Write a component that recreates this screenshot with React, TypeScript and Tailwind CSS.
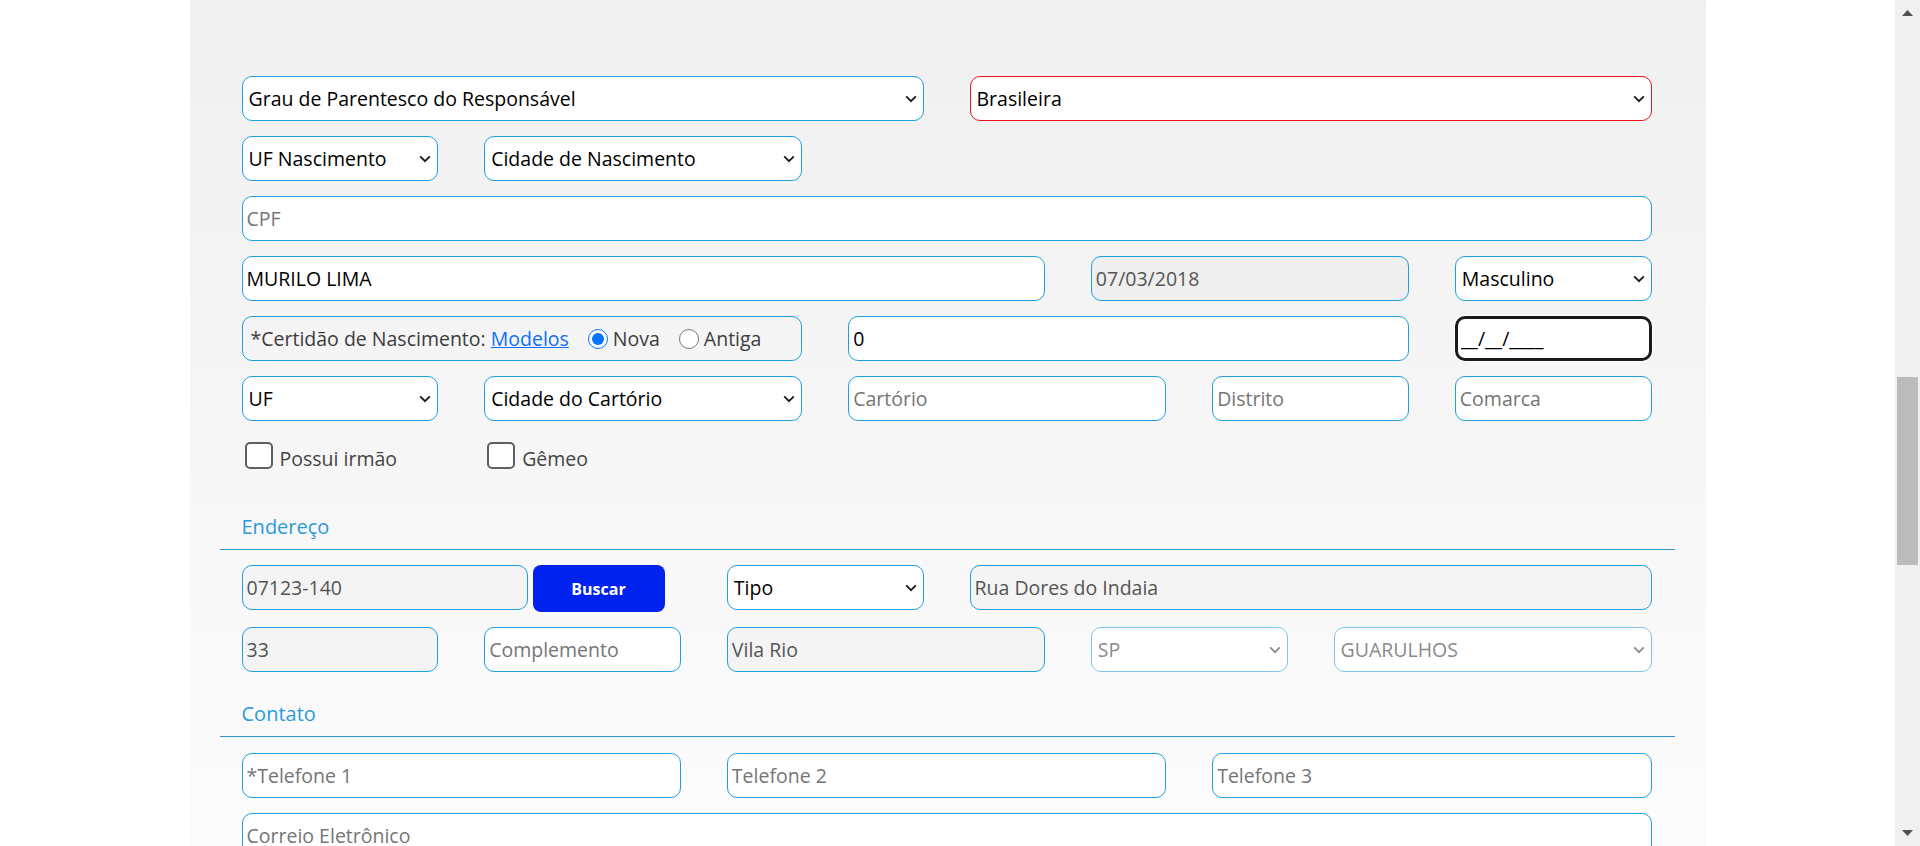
import React from "react";

const font = "font-['Open_Sans',sans-serif]";
const box = "h-[45px] rounded-[10px] border text-[19.5px] outline-none";
const blue = "border-[#1d9fe2]";

function Chevron({ muted }: { muted?: boolean }) {
  return (
    <svg
      className="pointer-events-none absolute right-[7px] top-1/2 -translate-y-1/2"
      width="12"
      height="8"
      viewBox="0 0 12 8"
      fill="none"
    >
      <path d="M1.2 1.4L6 6.2l4.8-4.8" stroke={muted ? "#8c8c8c" : "#1a1a1a"} strokeWidth="1.8" />
    </svg>
  );
}

function Select({ label, span, invalid, disabled }: { label: string; span: string; invalid?: boolean; disabled?: boolean }) {
  const border = invalid ? "border-[#e8141c]" : disabled ? "border-[#7cc6ee]" : blue;
  return (
    <div className={`relative ${span}`}>
      <select
        defaultValue={label}
        disabled={disabled}
        className={`${box} ${border} w-full appearance-none bg-white pl-[6px] pr-6 ${disabled ? "text-[#8a8a8a]" : "text-black"}`}
      >
        <option>{label}</option>
      </select>
      <Chevron muted={disabled} />
    </div>
  );
}

function Input({ span, placeholder, value, readOnly, tone }: { span: string; placeholder?: string; value?: string; readOnly?: boolean; tone?: string }) {
  return (
    <div className={span}>
      <input
        defaultValue={value}
        placeholder={placeholder}
        readOnly={readOnly}
        className={`${box} ${blue} w-full px-[4px] placeholder:text-[#757575] ${
          readOnly ? `${tone ?? "bg-[#f4f4f4]"} text-[#555]` : "bg-white text-black"
        }`}
      />
    </div>
  );
}

function Heading({ title, className }: { title: string; className: string }) {
  return (
    <div className={`ml-[30px] mr-[31px] border-b border-[#2d95d0] pb-[7px] pl-[22px] text-[20px] leading-[30px] text-[#2b9ad8] ${className}`}>
      {title}
    </div>
  );
}

const grid = "ml-[52px] mr-[54px] grid grid-cols-12 items-start gap-x-[46px] gap-y-[15px]";

function Scrollbar() {
  return (
    <div className="flex h-full w-[25px] shrink-0 flex-col bg-[#f0f0f0]">
      <div className="flex h-[26px] items-center justify-center">
        <svg width="11" height="6" viewBox="0 0 11 6">
          <path d="M0 6L5.5 0 11 6z" fill="#505050" />
        </svg>
      </div>
      <div className="flex-1 pt-[351px]">
        <div className="ml-[2px] h-[188px] w-[21px] bg-[#bcbcbc]" />
      </div>
      <div className="flex h-[26px] items-center justify-center">
        <svg width="11" height="6" viewBox="0 0 11 6">
          <path d="M0 0L5.5 6 11 0z" fill="#505050" />
        </svg>
      </div>
    </div>
  );
}

function CheckItem({ label }: { label: string }) {
  return (
    <label className="col-span-2 flex h-[27px] items-center gap-[7px] pl-[3px] text-[19.5px] text-[#444]">
      <span className="h-[27px] w-[28px] shrink-0 rounded-[5px] border-2 border-[#5f5f5f] bg-white" />
      <span className="mt-[7px] leading-[20px]">{label}</span>
    </label>
  );
}

export default function App() {
  return (
    <div className={`flex h-[846px] w-full overflow-hidden bg-white ${font}`}>
      <div className="flex-1">
        <div className="mx-auto h-full w-[1516px] bg-gradient-to-b from-[#f0f0f0] to-[#fcfcfc] pt-[76px]">
          <div className={grid}>
            <Select span="col-span-6" label="Grau de Parentesco do Responsável" />
            <Select span="col-span-6" label="Brasileira" invalid />

            <Select span="col-span-2" label="UF Nascimento" />
            <Select span="col-span-3" label="Cidade de Nascimento" />

            <Input span="col-span-12" placeholder="CPF" />

            <Input span="col-span-7" value="MURILO LIMA" />
            <Input span="col-span-3" value="07/03/2018" readOnly tone="bg-[#efefef]" />
            <Select span="col-span-2" label="Masculino" />

            <div className={`col-span-5 flex h-[45px] items-center rounded-[10px] border ${blue} pl-[8px] text-[19.5px] text-[#3c3c3c]`}>
              <span>*Certidão de Nascimento:&nbsp;</span>
              <a href="#" className="text-[#0d6efd] underline">Modelos</a>
              <label className="ml-[19px] flex items-center gap-[5px]">
                <input type="radio" name="cert" defaultChecked className="m-0 h-[20px] w-[20px] accent-[#0075ff]" />
                Nova
              </label>
              <label className="ml-[19px] flex items-center gap-[5px]">
                <input type="radio" name="cert" className="m-0 h-[20px] w-[20px]" />
                Antiga
              </label>
            </div>
            <Input span="col-span-5" value="0" />
            <div className="col-span-2">
              <input
                defaultValue="__/__/____"
                className="h-[45px] w-full rounded-[10px] border-[3px] border-[#1b1b1b] bg-white px-[3px] text-[19.5px] text-black shadow-[0_0_0_1px_#ffffff] outline-none"
              />
            </div>

            <Select span="col-span-2" label="UF" />
            <Select span="col-span-3" label="Cidade do Cartório" />
            <Input span="col-span-3" placeholder="Cartório" />
            <Input span="col-span-2" placeholder="Distrito" />
            <Input span="col-span-2" placeholder="Comarca" />
          </div>

          <div className={`${grid} mt-[21px]`}>
            <CheckItem label="Possui irmão" />
            <CheckItem label="Gêmeo" />
          </div>

          <Heading title="Endereço" className="mt-[43px]" />
          <div className={`${grid} mt-[15px]`}>
            <div className="col-span-4 flex gap-[5px]">
              <input
                defaultValue="07123-140"
                readOnly
                className={`${box} ${blue} w-[286px] shrink-0 bg-[#f4f4f4] px-[4px] text-[#555]`}
              />
              <button className="h-[47px] w-[132px] shrink-0 rounded-[8px] bg-[#0022ee] text-[16px] font-bold text-white">
                Buscar
              </button>
            </div>
            <Select span="col-span-2" label="Tipo" />
            <Input span="col-span-6" value="Rua Dores do Indaia" readOnly />

            <Input span="col-span-2" value="33" readOnly />
            <Input span="col-span-2" placeholder="Complemento" />
            <Input span="col-span-3" value="Vila Rio" readOnly />
            <Select span="col-span-2" label="SP" disabled />
            <Select span="col-span-3" label="GUARULHOS" disabled />
          </div>

          <Heading title="Contato" className="mt-[27px]" />
          <div className={`${grid} mt-[16px]`}>
            <Input span="col-span-4" placeholder="*Telefone 1" />
            <Input span="col-span-4" placeholder="Telefone 2" />
            <Input span="col-span-4" placeholder="Telefone 3" />
            <Input span="col-span-12" placeholder="Correio Eletrônico" />
          </div>
        </div>
      </div>
      <Scrollbar />
    </div>
  );
}
